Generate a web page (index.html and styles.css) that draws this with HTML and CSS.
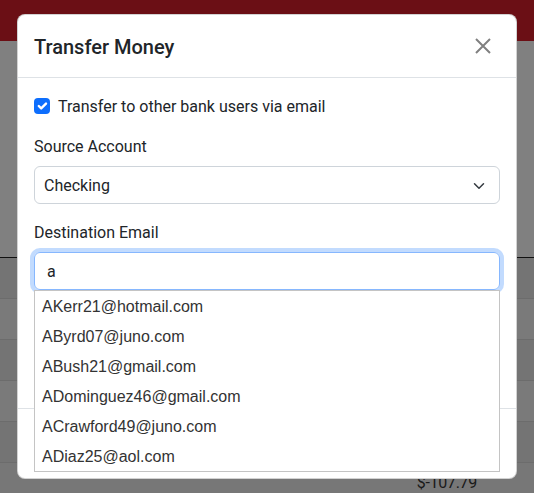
FILE: index.html
```html
<!DOCTYPE html>
<html>
<head>
<meta charset="utf-8">
<link rel="stylesheet" href="styles.css">
</head>
<body>
<div class="page">
  <nav class="navbar"></nav>
  <div class="content">
    <div class="table-head"></div>
    <div class="row odd"></div>
    <div class="row"></div>
    <div class="row odd"></div>
    <div class="row"></div>
    <div class="row odd"></div>
    <div class="row last"><span class="amount">$-107.79</span></div>
  </div>
</div>

<div class="modal">
  <div class="modal-header">
    <h5 class="modal-title">Transfer Money</h5>
    <button class="btn-close" aria-label="Close">
      <svg width="16" height="16" viewBox="0 0 16 16"><path d="M1 1 L15 15 M15 1 L1 15" stroke="#808080" stroke-width="2" fill="none"/></svg>
    </button>
  </div>
  <div class="modal-body">
    <div class="form-check">
      <span class="check-box">
        <svg width="16" height="16" viewBox="0 0 20 20"><path d="M6 10l3 3l6-6" fill="none" stroke="#fff" stroke-linecap="round" stroke-linejoin="round" stroke-width="3"/></svg>
      </span>
      <label class="check-label">Transfer to other bank users via email</label>
    </div>
    <div class="group">
      <label class="form-label">Source Account</label>
      <div class="form-select">
        <span>Checking</span>
        <svg class="chev" width="16" height="12" viewBox="0 0 16 16"><path d="M2 5l6 6 6-6" fill="none" stroke="#343a40" stroke-linecap="round" stroke-linejoin="round" stroke-width="2"/></svg>
      </div>
    </div>
    <div class="group">
      <label class="form-label">Destination Email</label>
      <div class="combo">
        <div class="form-control focus"><span class="val">a</span></div>
        <ul class="suggest">
          <li>AKerr21@hotmail.com</li>
          <li>AByrd07@juno.com</li>
          <li>ABush21@gmail.com</li>
          <li>ADominguez46@gmail.com</li>
          <li>ACrawford49@juno.com</li>
          <li>ADiaz25@aol.com</li>
        </ul>
      </div>
    </div>
    <div class="group hidden-group">
      <div class="label-space"></div>
      <div class="form-control"></div>
    </div>
  </div>
  <div class="modal-footer"></div>
</div>
</body>
</html>
```

FILE: styles.css
```css
* { box-sizing: border-box; }
html, body { margin: 0; padding: 0; }
body {
  width: 534px;
  height: 493px;
  overflow: hidden;
  background: #808080;
  font-family: Roboto, "Noto Sans", sans-serif;
  color: #212529;
  position: relative;
}
.page { width: 534px; }
.navbar { height: 41px; background: #6b0f15; }
.table-head { height: 217px; border-bottom: 1px solid #111; }
.row { height: 41px; border-bottom: 1px solid #6c6c6c; background: #7a7a7a; display: flex; justify-content: flex-end; align-items: flex-start; }
.row.odd { background: #747474; }
.row.last { border-bottom: 0; background: #777; }
.amount { font-size: 16px; line-height: 20px; color: #1a1a1a; padding-right: 57px; padding-top: 10px; letter-spacing: -0.3px; }

.modal {
  position: absolute;
  left: 17px;
  top: 14px;
  width: 500px;
  background: #fff;
  border: 1px solid rgba(0,0,0,.175);
  border-radius: 8px;
}
.modal-header {
  display: flex;
  align-items: center;
  justify-content: space-between;
  padding: 16px;
  border-bottom: 1px solid #dee2e6;
}
.modal-title {
  margin: 0;
  font-size: 20px;
  font-weight: 500;
  line-height: 30px;
  padding-top: 1px;
  height: 30px;
}
.btn-close {
  border: 0;
  background: transparent;
  padding: 0;
  width: 16px;
  height: 16px;
  margin-right: 9px;
  display: flex;
}
.modal-body { padding: 16px; }
.form-check {
  display: flex;
  align-items: center;
  height: 24px;
  margin-bottom: 16px;
  font-size: 16px;
  line-height: 24px;
}
.check-label { padding-top: 2px; }
.check-box {
  width: 16px;
  height: 16px;
  border-radius: 4px;
  background: #0d6efd;
  display: flex;
  margin-right: 8px;
}
.group { margin-bottom: 16px; }
.form-label {
  display: block;
  font-size: 16px;
  line-height: 24px;
  height: 24px;
  padding-top: 1px;
  margin-bottom: 8px;
}
.form-select {
  height: 38px;
  border: 1px solid #ced4da;
  border-radius: 6px;
  display: flex;
  align-items: center;
  justify-content: space-between;
  padding: 1px 12px 0 9px;
  font-size: 16px;
}
.combo { position: relative; }
.form-control {
  height: 38px;
  border: 1px solid #ced4da;
  border-radius: 6px;
  padding: 1px 12px 0;
  display: flex;
  align-items: center;
  font-size: 16px;
}
.form-control.focus {
  border-color: #86b7fe;
  box-shadow: 0 0 0 4px rgba(13,110,253,.25);
}
.label-space { height: 32px; }
.suggest {
  position: absolute;
  left: 0;
  right: 0;
  top: 38px;
  margin: 0;
  padding: 0;
  list-style: none;
  background: #fff;
  border: 1px solid #c4c4c4;
  z-index: 2;
}
.suggest li {
  height: 30px;
  line-height: 30px;
  padding-left: 7px;
  padding-top: 1px;
  font-family: "Liberation Sans", Arial, sans-serif;
  font-size: 16px;
  color: #333;
}
.modal-footer {
  border-top: 1px solid #dee2e6;
  height: 70px;
}
```
